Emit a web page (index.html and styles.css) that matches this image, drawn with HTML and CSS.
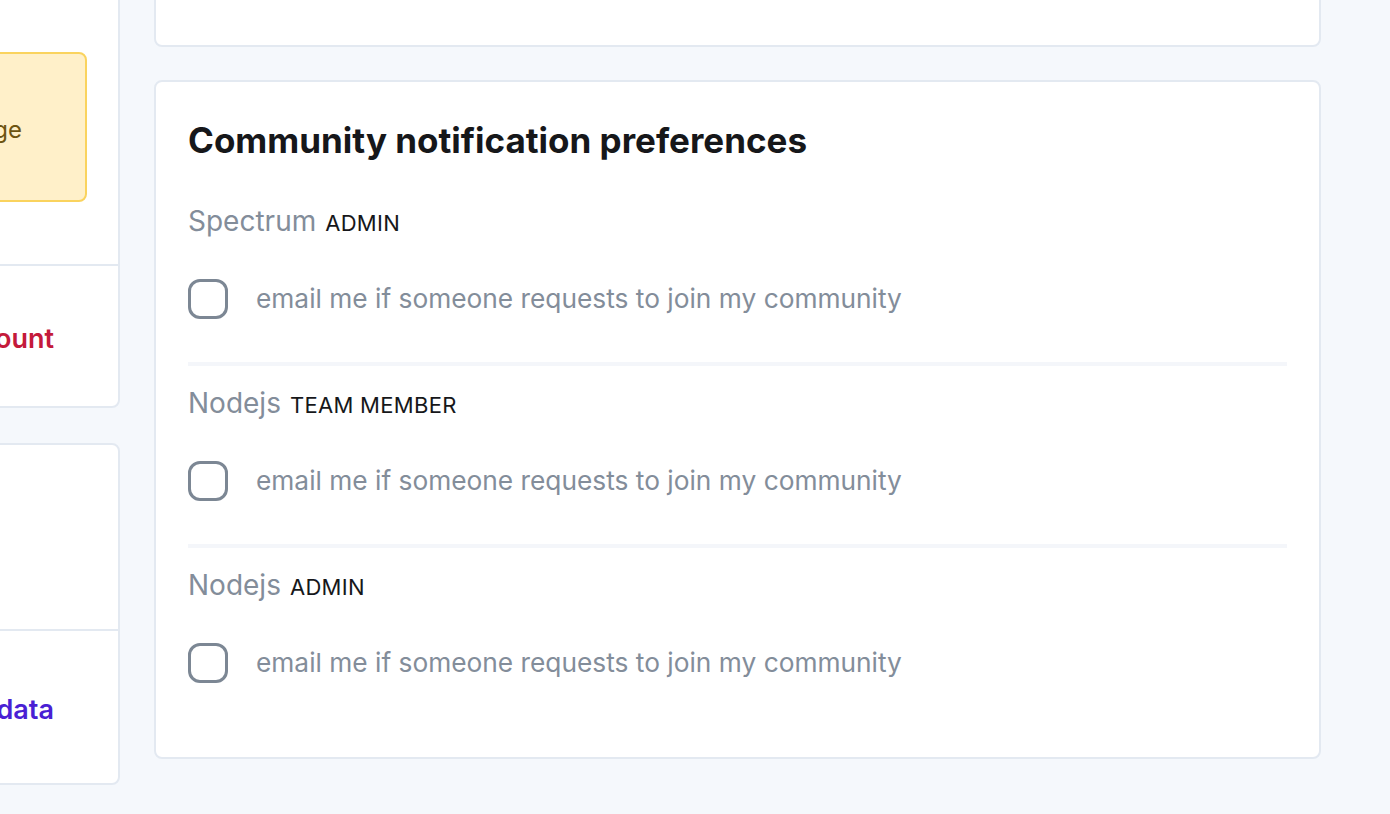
FILE: index.html
```html
<!DOCTYPE html>
<html lang="en">
<head>
    <meta charset="UTF-8">
    <meta name="viewport" content="width=device-width, initial-scale=1.0">
    <title>Settings</title>
    <link rel="stylesheet" href="styles.css">
</head>
<body>
    <div class="layout">
        <div class="side">
            <div class="card billing">
                <div class="section top">
                    <div class="notice">Upgrade your plan to manage</div>
                </div>
                <div class="section action">
                    <a href="#" class="danger">Delete my account</a>
                </div>
            </div>
            <div class="card export">
                <div class="section blank"></div>
                <div class="section action">
                    <a href="#" class="link">Download my data</a>
                </div>
            </div>
        </div>

        <div class="main">
            <div class="card prev"></div>

            <div class="card prefs">
                <h3>Community notification preferences</h3>

                <div class="community">
                    <div class="name">Spectrum <span class="role">Admin</span></div>
                    <label class="check">
                        <span class="box"></span>
                        email me if someone requests to join my community
                    </label>
                </div>

                <div class="community">
                    <div class="name">Nodejs <span class="role">Team member</span></div>
                    <label class="check">
                        <span class="box"></span>
                        email me if someone requests to join my community
                    </label>
                </div>

                <div class="community">
                    <div class="name">Nodejs <span class="role">Admin</span></div>
                    <label class="check">
                        <span class="box"></span>
                        email me if someone requests to join my community
                    </label>
                </div>
            </div>
        </div>
    </div>
</body>
</html>
```

FILE: styles.css
```css
* {
    box-sizing: border-box;
}
body {
    margin: 0;
    background: #f5f8fc;
    font-family: Inter, "Noto Sans", sans-serif;
    color: #16171a;
    overflow: hidden;
}
.layout {
    display: flex;
    align-items: flex-start;
    gap: 34px;
    margin: -48px 0 0 -280px;
}
.side {
    width: 400px;
    display: flex;
    flex-direction: column;
    gap: 35px;
}
.main {
    width: 1167px;
    display: flex;
    flex-direction: column;
    gap: 33px;
}
.card {
    background: #fff;
    border: 2px solid #e3e9f1;
    border-radius: 8px;
}
.billing {
    height: 456px;
}
.export {
    height: 342px;
}
.section {
    border-bottom: 2px solid #e3e9f1;
}
.section:last-child {
    border-bottom: none;
}
.section.top {
    height: 312px;
    padding: 98px 31px 0 32px;
}
.notice {
    height: 150px;
    background: #fff0c9;
    border: 2px solid #fad35e;
    border-radius: 8px;
    color: #6d5411;
    font-size: 24px;
    display: flex;
    align-items: center;
    justify-content: flex-end;
    padding: 4px 63px 0 24px;
    white-space: nowrap;
}
.section.blank {
    height: 186px;
}
.section.action {
    height: 140px;
    display: flex;
    align-items: center;
    justify-content: flex-end;
    padding: 4px 64px 0 32px;
}
.export .section.action {
    height: 152px;
}
.danger, .link {
    font-size: 27px;
    font-weight: 600;
    text-decoration: none;
    white-space: nowrap;
}
.danger {
    color: #c41a3b;
}
.link {
    color: #4a1fd4;
}
.prev {
    height: 95px;
}
.prefs {
    height: 679px;
    padding: 37px 32px 31px;
}
h3 {
    margin: 0 0 23px;
    font-size: 35px;
    font-weight: 700;
    line-height: 42px;
    color: #16171a;
}
.community {
    padding: 22px 0 43px;
    border-bottom: 4px solid #f4f6fa;
}
.community:last-child {
    border-bottom: none;
}
.name {
    display: flex;
    align-items: baseline;
    gap: 9px;
    height: 31px;
    font-size: 28px;
    line-height: 31px;
    color: #838d9a;
}
.role {
    font-size: 22px;
    line-height: 1;
    text-transform: uppercase;
    color: #16171a;
    letter-spacing: 0.3px;
}
.check {
    display: flex;
    align-items: center;
    gap: 28px;
    margin-top: 42px;
    font-size: 26.3px;
    line-height: 40px;
    color: #838d9a;
}
.box {
    width: 40px;
    height: 40px;
    border: 3px solid #7c8794;
    border-radius: 12px;
    flex-shrink: 0;
}
```
